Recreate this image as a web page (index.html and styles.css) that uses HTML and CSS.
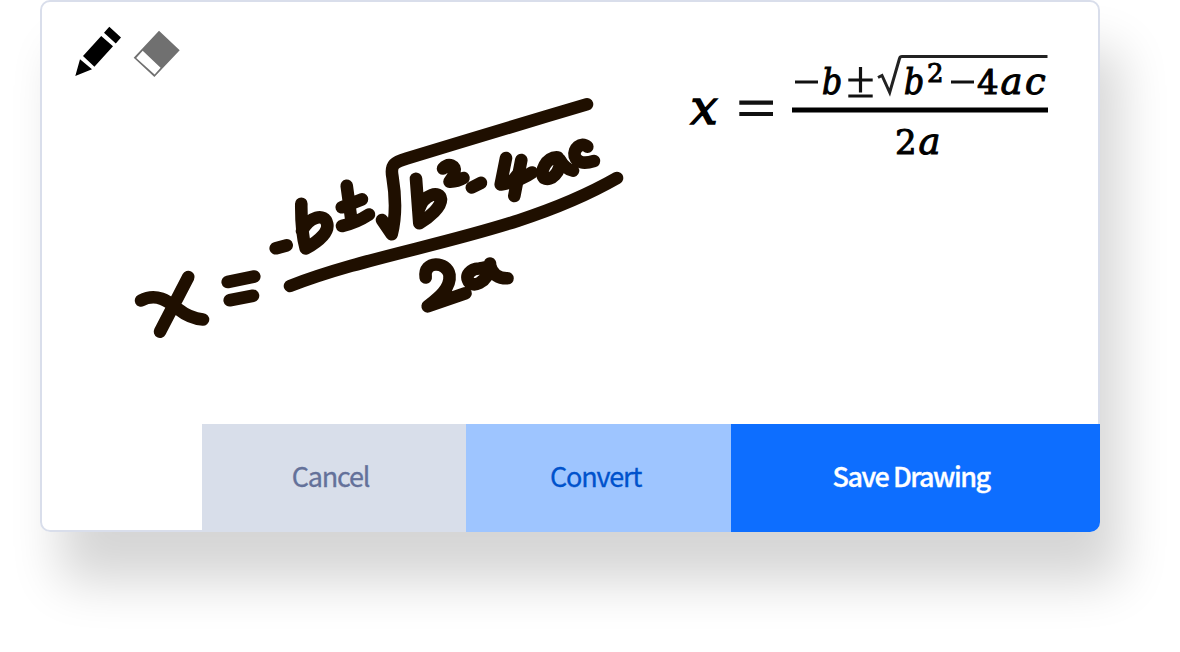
FILE: index.html
```html
<!DOCTYPE html>
<html lang="en">
<head>
<meta charset="utf-8">
<title>Drawing</title>
<link rel="stylesheet" href="styles.css">
</head>
<body>
<main class="card">
  <div class="tools">
    <button class="tool" aria-label="Pencil">
      <svg class="tool-icon" viewBox="74 25 48 53"><path d="M75.3 76 80 59.3 92 69.3zM83 56 101.2 36 113 46.3 94.4 66.7zM109.3 26.8 121 37.6 115.8 43.4 104 32.7z"/></svg>
    </button>
    <button class="tool" aria-label="Eraser">
      <svg class="tool-icon" viewBox="133 25 48 53"><path fill="#707070" fill-rule="evenodd" d="M159 30.7 179.7 50.3 154.4 77 133.7 57.7zM142.7 50.7 136.2 57.9 154.6 74.5 160.6 67.8z"/></svg>
    </button>
  </div>
  <svg class="canvas" viewBox="40 0 1060 424">
    <g class="ink">
      <path d="M188.3 277 160 331.7M141 300.5C157 292 169 302 178 309Q190 318.5 203 319.5"/>
      <path d="M227.7 282 254.3 276.5M229.7 300.3 253 295.7"/>
      <path d="M275.7 248.3 286.7 245.3"/>
      <path d="M301.3 203.7Q301 232 305.7 248.5C321 240 328.5 231 327.2 224C325 212 309 217 302 231"/>
      <path d="M346.7 185.7 351.5 221M341.7 207.3 362 199.3M342 226Q356 223 369 214.5"/>
      <path d="M382 220 391.7 234.3C396 217 395.5 195 392.5 177C390 164 395 162 406.7 158.5Q500 130 587 104.3"/>
      <path d="M290 286C390 247 514 237 617 178"/>
      <path d="M416 178.7 419.3 223.3C430 217 441 207 441 199.5C440 190 424 194 419 209"/>
      <path d="M443 168.5C449 162 456.5 166 454.5 172Q453 178 449.5 181.7Q457 182 463.5 178"/>
      <path d="M471.8 187.5 481 182.8"/>
      <path d="M506 158 500.7 184.5Q520 181 532 172.5M521.3 160 514.3 196M511 183 518 174"/>
      <path d="M558 157.5C546 156 539 173 544 178C551 182 561 172 560 160Q565 169 573 170.7"/>
      <path d="M587.3 146.7C581 141 573 149 574.7 156Q578 166 594 161"/>
      <path d="M425.7 277.5C423 260 447 261 449.5 275C451 289 437 299 427.7 306.3L465.5 293.3"/>
      <path d="M490 263.5C489 267 484 268 479 268.5C470 269 466 275 468 280C471 289 488 284 490 265C492 275 499 278.5 507.5 278.3"/>
    </g>
    <g class="formula">
      <text class="variable" x="690.5" y="124" font-size="48">x</text>
      <path class="equals" d="M739.3 102.7H773M739.3 114H773"/>
      <path class="operator" d="M795 82H818M848.3 80H872.7M860.5 67V92.5M848.3 96H872.7M951 82H974"/>
      <text class="narrow" x="822" y="94" font-size="35">b</text>
      <path class="radical" d="M878 77.5 882 75.5 889.7 92.5 899.5 58.5Q900 56.5 902 56.5H1047.5"/>
      <text class="narrow" x="904" y="94" font-size="35">b</text>
      <text class="digit" x="927" y="81.5" font-size="26">2</text>
      <text class="digit" x="977" y="93.5" font-size="34">4</text>
      <text x="1000.5" y="94" font-size="37">a</text>
      <text x="1025" y="94" font-size="37">c</text>
      <path class="fraction" d="M792 110H1048"/>
      <text class="digit" x="895" y="153.5" font-size="34">2</text>
      <text x="918.5" y="154" font-size="37">a</text>
    </g>
  </svg>
  <footer class="actions">
    <button class="action cancel">Cancel</button>
    <button class="action convert">Convert</button>
    <button class="action save">Save Drawing</button>
  </footer>
</main>
</body>
</html>
```
FILE: styles.css
```css
body {
  margin: 0;
  background: #fff;
  overflow: hidden;
  font-family: "Noto Sans CJK SC", "Noto Sans", sans-serif;
}

.card {
  position: relative;
  display: flex;
  flex-direction: column;
  width: 1060px;
  height: 532px;
  margin: 0 40px 120px;
  overflow: hidden;
  border-radius: 10px;
  background: #fff;
  box-shadow: inset 0 0 0 2px #d9deeb, 20px 50px 50px rgba(0, 0, 0, 0.165);
}

.tools {
  position: absolute;
  top: 25px;
  left: 34px;
  display: flex;
  gap: 11px;
}

.tool {
  padding: 0;
  border: 0;
  background: none;
}

.tool-icon {
  display: block;
  width: 48px;
  height: 53px;
}

.canvas {
  display: block;
  width: 1060px;
  height: 424px;
}

.ink {
  fill: none;
  stroke: #1f0f00;
  stroke-width: 12.6;
  stroke-linecap: round;
  stroke-linejoin: round;
}

.formula {
  font-family: "DejaVu Serif", serif;
  font-style: italic;
  stroke: #000;
  stroke-width: 1;
}

.formula .narrow {
  font-stretch: condensed;
}

.formula .variable {
  stroke-width: 1.6;
}

.formula .digit {
  font-style: normal;
}

.equals {
  stroke: #111;
  stroke-width: 4.2;
}

.operator {
  stroke: #111;
  stroke-width: 3.2;
}

.radical {
  fill: none;
  stroke: #222;
  stroke-width: 3;
}

.fraction {
  stroke: #000;
  stroke-width: 5;
}

.actions {
  display: grid;
  grid-template-columns: 264px 265.3px 368.7px;
  justify-content: end;
  height: 108px;
}

.action {
  padding: 0 0 6px;
  border: 0;
  font: 400 27px "Noto Sans CJK SC", "Noto Sans", sans-serif;
  letter-spacing: -1.2px;
  -webkit-text-stroke: 0.3px currentColor;
}

.cancel {
  padding-right: 7px;
  background: #d8deea;
  color: #64719a;
}

.convert {
  padding-right: 6px;
  background: #9ec5ff;
  color: #0052cc;
}

.save {
  padding-right: 9px;
  background: #0d6eff;
  color: #fff;
  font-weight: 500;
  letter-spacing: -1.5px;
}
```
